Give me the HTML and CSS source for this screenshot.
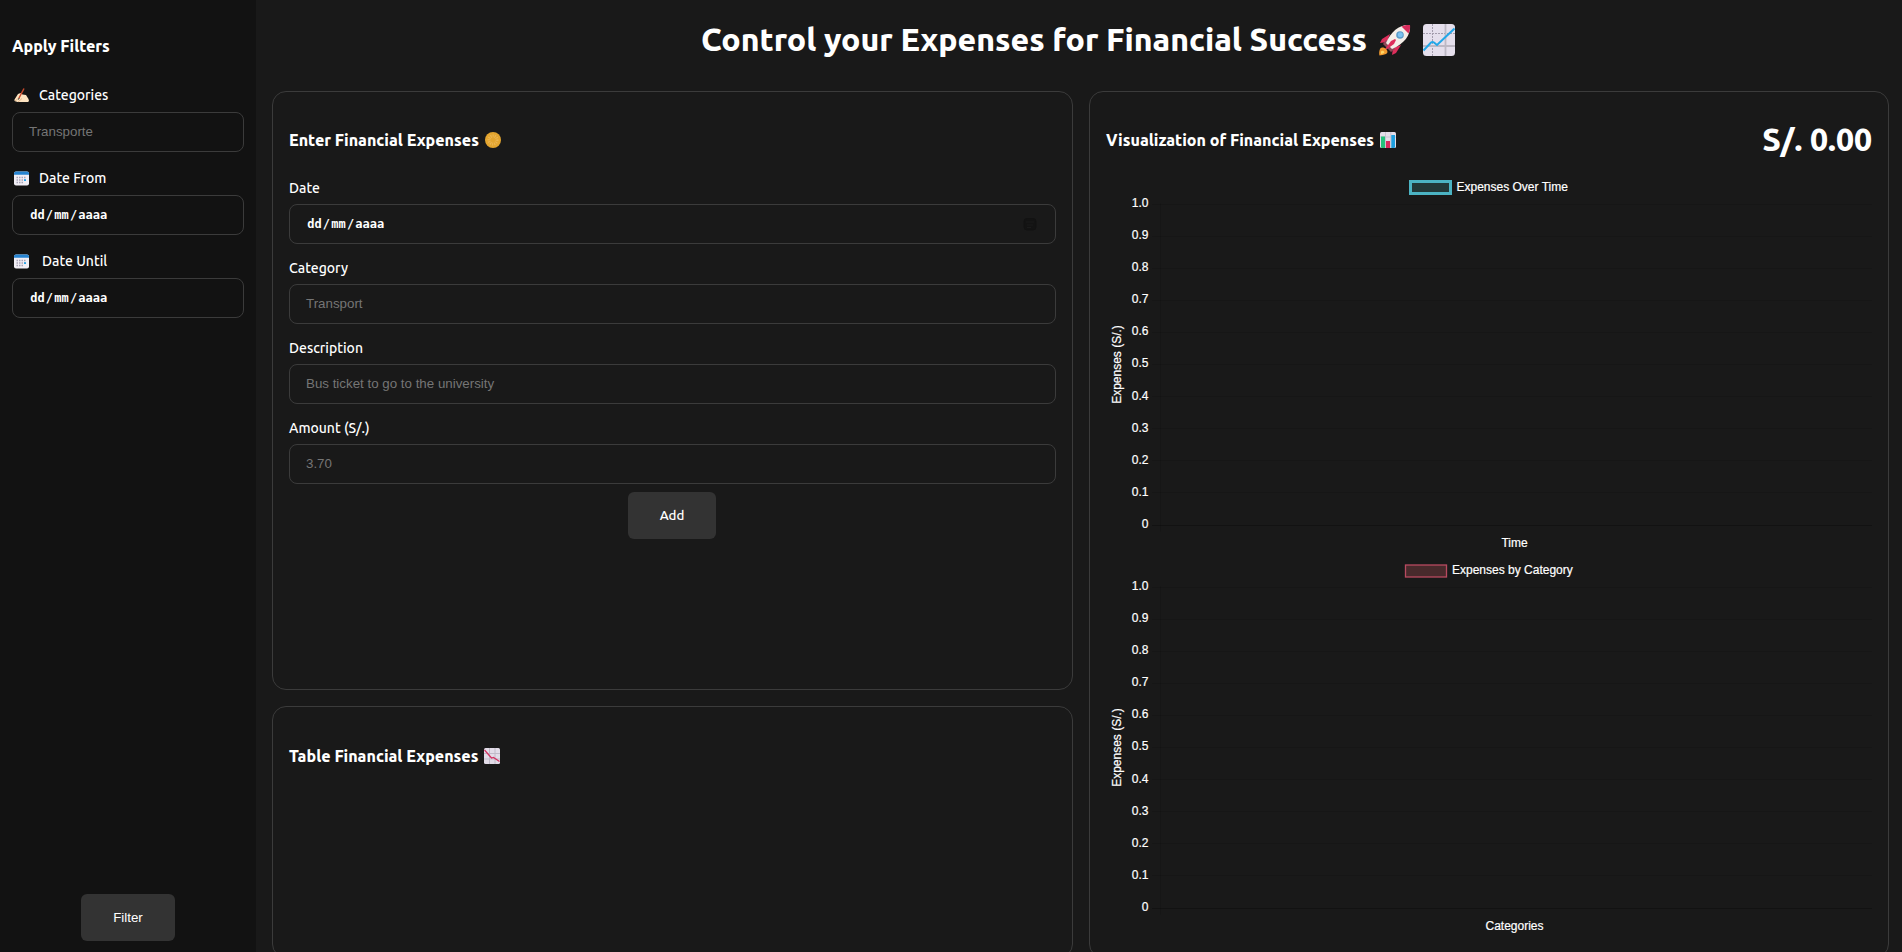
FILE: index.html
```html
<!DOCTYPE html>
<html lang="en">
<head>
<meta charset="utf-8">
<title>Expenses</title>
<link rel="stylesheet" href="styles.css">
</head>
<body>
<aside class="sidebar">
  <h3 class="heading filters-title"><span>Apply Filters</span></h3>
  <div class="filter">
    <div class="filter-label">
      <svg class="mini" viewBox="0 0 15 15"><path d="M.5 11.500 4 6l2.500-1 2 1.500 3.500.5 2.500 4 .5 2-1 1H3.500L.5 13z" fill="#fde3c0"/><path d="M1 13 5.500 9.500M4 14l4-3.500" stroke="#d9ab7e" stroke-width=".8"/><path d="m5 10 5-9.500" stroke="#c8492a" stroke-width="1.500"/><path d="m4.500 11.500.7-1.500" stroke="#222"/></svg>
      <span class="label">Categories</span>
    </div>
    <div class="field placeholder">Transporte</div>
  </div>
  <div class="filter">
    <div class="filter-label">
      <svg class="mini" viewBox="0 0 15 15"><rect y=".500" width="15" height="14" rx="2" fill="#f1eef5"/><path d="M0 3.700V2.500a2 2 0 0 1 2-2h11a2 2 0 0 1 2 2v1.200z" fill="#2583d0"/><path d="M2.500 6.500h10M2.500 9h10M2.500 11.500h7" stroke="#a9a4b8" stroke-width="1.300" stroke-dasharray="1.500 1"/><path d="M10 8.300h2v1.700h-2z" fill="#29a5e8"/></svg>
      <span class="label">Date From</span>
    </div>
    <div class="field date"><span>dd</span>/<span>mm</span>/<span>aaaa</span></div>
  </div>
  <div class="filter">
    <div class="filter-label">
      <svg class="mini" viewBox="0 0 15 15"><rect y=".500" width="15" height="14" rx="2" fill="#f1eef5"/><path d="M0 3.700V2.500a2 2 0 0 1 2-2h11a2 2 0 0 1 2 2v1.200z" fill="#2583d0"/><path d="M2.500 6.500h10M2.500 9h10M2.500 11.500h7" stroke="#a9a4b8" stroke-width="1.300" stroke-dasharray="1.500 1"/><path d="M10 8.300h2v1.700h-2z" fill="#29a5e8"/></svg>
      <span class="label indent">Date Until</span>
    </div>
    <div class="field date"><span>dd</span>/<span>mm</span>/<span>aaaa</span></div>
  </div>
  <button class="btn btn-filter">Filter</button>
</aside>
<main class="main">
  <h1 class="page-title"><span>Control your Expenses for Financial Success</span>
    <svg class="rocket" viewBox="0 0 32 32"><path d="M11 10 3 15l-2 4 7-1zM22 21l-5 8-4 2 1-7z" fill="#dd2e5b"/><path d="m7 16 9 9-4 3-8-8z" fill="#8f4a58"/><path d="M31 1C21 0 12 7 7 19l6 6C25 20 32 11 31 1z" fill="#f4eee8"/><path d="M31 1c-3-.4-6 .200-8.500 1.500l7 7C31 6.500 31.400 4 31 1z" fill="#d82c5c"/><path d="m16 15-4 2-8 11 11-8 2-4z" fill="#dd2e5b"/><circle cx="21" cy="11" r="3.800" fill="#5a9bc9"/><circle cx="21.300" cy="10.700" r="2.500" fill="#7cc2f0"/><path d="M1 25c1-2 4-2 6 0s2 4 0 5-5 1-6.500 1.500C0 30 0 27 1 25z" fill="#f29a2e"/><path d="M2 27.500c1-1 2-1 3 0s0 2-3 2.500z" fill="#ffd766"/></svg>
    <svg class="trend" viewBox="0 0 32 32"><rect width="32" height="32" rx="3.500" fill="#e5dfec"/><path d="M9.500 0v32M0 9.500h32" stroke="#a39cac" stroke-dasharray="2 1"/><path d="M22.500 0v32M0 22h32" stroke="#bdb8c4" stroke-width="1.800"/><path d="m.5 26.500 7.500-8q1.500-1 3 0l3 2.500L31.500 4.500" fill="none" stroke="#22a7e8" stroke-width="2"/></svg>
  </h1>
  <div class="board">
    <div class="column">
      <section class="card entry">
        <h3 class="heading"><span>Enter Financial Expenses</span>
          <svg class="emoji" viewBox="0 0 16 16"><circle cx="8" cy="8" r="8" fill="#e3a52f"/><circle cx="8" cy="8" r="4" fill="none" stroke="#ebb654" stroke-width="3" stroke-dasharray="1 1"/></svg>
        </h3>
        <div class="row"><div class="label">Date</div>
          <div class="field date"><span>dd</span>/<span>mm</span>/<span>aaaa</span>
            <svg class="picker" viewBox="0 0 14 14"><rect x="1" y="1.500" width="12" height="11.500" rx="3" fill="#131313" stroke="#121212"/><path d="M3 5h8M4 8h6M4 10.500h4" stroke="#1b1b1b"/></svg></div></div>
        <div class="row"><div class="label">Category</div><div class="field placeholder">Transport</div></div>
        <div class="row"><div class="label">Description</div><div class="field placeholder">Bus ticket to go to the university</div></div>
        <div class="row"><div class="label">Amount (S/.)</div><div class="field placeholder">3.70</div></div>
        <button class="btn btn-add">Add</button>
      </section>
      <section class="card">
        <h3 class="heading"><span>Table Financial Expenses</span>
          <svg class="emoji" viewBox="0 0 16 16"><rect width="16" height="16" rx="1.500" fill="#e2dce8"/><path d="M5.500 0v16M11 0v16M0 5.500h16M0 11h16" stroke="#c0bac8"/><path d="m.5 2 7 8 2-.5 6 4" fill="none" stroke="#d3305f" stroke-width="1.200"/></svg>
        </h3>
      </section>
    </div>
    <section class="card visual">
      <header class="visual-head">
        <h3 class="heading"><span>Visualization of Financial Expenses</span>
          <svg class="emoji" viewBox="0 0 16 16"><rect width="16" height="16" rx="1.500" fill="#e4dde9"/><path d="M5.500 0v16M10.800 0v16M0 5h16" stroke="#c3bccb" stroke-width=".8"/><path d="M1 4.500h4V16H2a1 1 0 0 1-1-1z" fill="#25c17c"/><path d="M6 9h4v7H6z" fill="#d92a5e"/><path d="M11.300 3H15v12a1 1 0 0 1-1 1h-2.700z" fill="#1d9fe0"/></svg>
        </h3>
        <div class="total">S/. 0.00</div>
      </header>
      <svg class="chart" id="time" viewBox="0 0 768 383"></svg>
      <svg class="chart" id="cats" viewBox="0 0 768 383"></svg>
    </section>
  </div>
</main>
<script src="charts.js"></script>
</body>
</html>
```
FILE: styles.css
```css
* { box-sizing: border-box; }
body {
  margin: 0;
  height: 952px;
  display: flex;
  overflow: hidden;
  background: #191919;
  color: #fff;
  font-family: Ubuntu, "Noto Sans", sans-serif;
}
.sidebar {
  width: 256px;
  flex: none;
  height: 952px;
  padding: 35px 12px 11px;
  background: #121212;
  display: flex;
  flex-direction: column;
}
.heading { margin: 0; font-size: 16px; line-height: 22px; font-weight: 800; display: flex; align-items: center; white-space: nowrap; }
.filters-title { margin-bottom: 28px; }
.filter { margin-bottom: 16px; }
.filter-label { display: flex; align-items: center; height: 20px; margin-bottom: 7px; padding-left: 2px; }
.mini { width: 15px; height: 15px; margin-right: 10px; }
.label { font-size: 14px; line-height: 20px; font-weight: 500; white-space: nowrap; }
.indent { margin-left: 3px; }
.field {
  height: 40px;
  border: 1px solid #3b3b3b;
  border-radius: 8px;
  padding: 0 16px;
  display: flex;
  align-items: center;
  font: 13.333px/15px "Liberation Sans", Arial, sans-serif;
}
.placeholder { color: #757575; padding-bottom: 1px; }
.date { font: bold 12px/16px "DejaVu Sans Mono", monospace; }
.date span { padding: 0 1.200px; }
.picker { width: 14px; height: 14px; margin: 0 2px 0 auto; }
.btn {
  border: 0;
  border-radius: 6px;
  background: #333;
  color: #fff;
  height: 47px;
  padding: 0;
  align-self: center;
  font: 500 13.333px/20px Ubuntu, "Noto Sans", sans-serif;
}
.btn-filter { width: 94px; margin-top: auto; font: 13.333px/20px "Liberation Sans", Arial, sans-serif; }
.btn-add { width: 88px; margin-top: -6px; margin-right: 1px; }
.main { flex: 1; padding: 16px 13px 0 16px; height: 952px; }
.page-title { margin: 0 5px 27px 0; height: 48px; font-size: 32px; line-height: 46px; font-weight: 800; display: flex; align-items: center; justify-content: center; white-space: nowrap; }
.page-title span { margin-top: -2px; letter-spacing: -.02px; }
.rocket, .trend { width: 32px; height: 32px; margin: -1px 0 0 12px; }
.board { display: grid; grid-template-columns: 801px 800px; gap: 16px; height: 867px; }
.column { display: grid; grid-template-rows: 599px 1fr; gap: 16px; }
.card { border: 1px solid #3b3b3b; border-radius: 14px; padding: 38px 16px 0; }
.entry { display: flex; flex-direction: column; padding-top: 37px; }
.entry .heading { margin-bottom: 27px; }
.emoji { width: 16px; height: 16px; margin-left: 6px; }
.row { margin-bottom: 14px; }
.row .label { margin-bottom: 6px; }
.visual { padding-top: 25px; }
.visual-head { display: flex; justify-content: space-between; align-items: center; height: 46px; margin-bottom: 11px; }
.total { font-size: 32px; line-height: 44px; font-weight: 800; margin-top: -2px; }
.chart { display: block; width: 768px; height: 383px; font: 12px "Liberation Sans", Arial, sans-serif; fill: #fff; }
.chart text { stroke: #fff; stroke-width: .2px; }
```
FILE: charts.js
```js
// Draws an empty bar/line chart: legend, y ticks, grid, axis titles.
function drawChart(id, o) {
  let s = `<rect x="${o.boxX}" y="${o.boxY}" width="${o.boxW}" height="${o.boxH}" fill="${o.fill}" stroke="${o.stroke}" stroke-width="${o.sw}"/>`;
  s += `<text x="${o.textX}" y="16.500">${o.label}</text>`;
  for (let i = 0; i <= 10; i++) {
    const y = o.top + i * 32.1;
    const v = i === 10 ? '0' : (1 - i / 10).toFixed(1);
    s += `<text x="42.500" y="${y + 3.4}" text-anchor="end">${v}</text>`;
    s += `<path d="M46 ${Math.round(y) + 0.5}H766" stroke="#000" stroke-opacity="${i === 10 ? 0.25 : 0.1}"/>`;
  }
  s += `<path d="M54.500 ${o.top}v328" stroke="#000" stroke-opacity=".1"/>`;
  s += `<text transform="translate(15 ${o.top + 161}) rotate(-90)" text-anchor="middle">Expenses (S/.)</text>`;
  s += `<text x="408.500" y="${o.top + 343.2}" text-anchor="middle">${o.axis}</text>`;
  document.getElementById(id).innerHTML = s;
}
drawChart('time', { boxX: 304.5, boxY: 7.5, boxW: 40, boxH: 12, fill: '#223838', stroke: '#4bb3c3', sw: 3, textX: 350.5, label: 'Expenses Over Time', top: 29.5, axis: 'Time' });
drawChart('cats', { boxX: 299.5, boxY: 8, boxW: 41, boxH: 12, fill: '#482a2c', stroke: '#b84a60', sw: 1.3, textX: 346, label: 'Expenses by Category', top: 29.5, axis: 'Categories' });
```
